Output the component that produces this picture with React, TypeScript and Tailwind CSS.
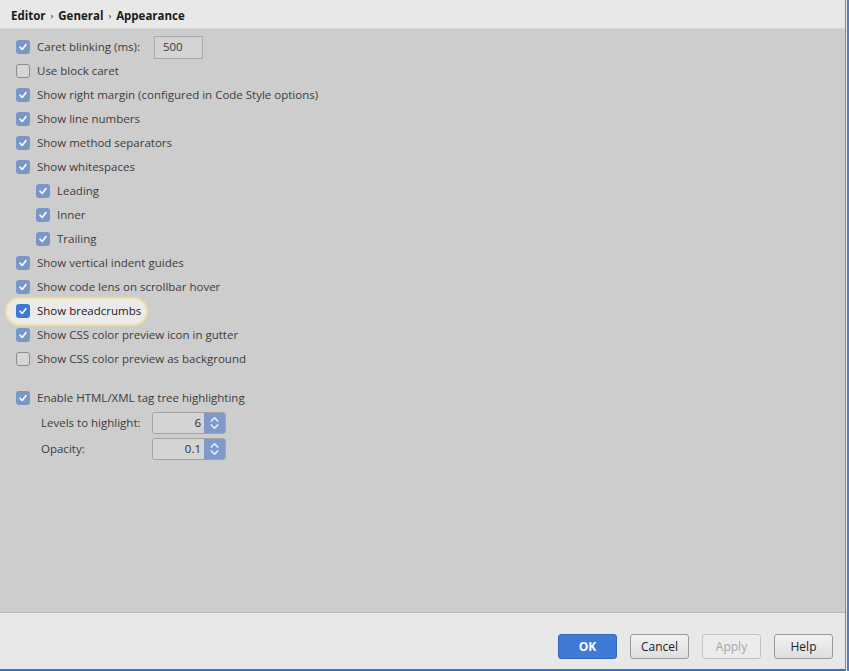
import React from 'react';

const font = { fontFamily: '"Open Sans", "Noto Sans", "Liberation Sans", sans-serif' };

const Check: React.FC<{ checked: boolean; bright?: boolean }> = ({ checked, bright }) => {
  if (!checked) {
    return <span className="w-[14px] h-[14px] rounded-[3px] border border-[#8e8e8e] bg-[#d6d6d6] shrink-0" />;
  }
  return (
    <span
      className={`w-[14px] h-[14px] rounded-[3px] shrink-0 flex items-center justify-center ${
        bright ? 'bg-[#3c78d8]' : 'bg-[#7896c7]'
      }`}
    >
      <svg width="10" height="10" viewBox="0 0 10 10">
        <path d="M2 5.2 L4.2 7.4 L8 2.6" fill="none" stroke="#fff" strokeWidth="1.6" strokeLinecap="round" strokeLinejoin="round" />
      </svg>
    </span>
  );
};

const Row: React.FC<{ label: string; checked: boolean; indent?: boolean; children?: React.ReactNode }> = ({
  label,
  checked,
  indent,
  children,
}) => (
  <div className={`h-6 flex items-center ${indent ? 'pl-[36px]' : 'pl-[16px]'}`}>
    <Check checked={checked} />
    <span className="ml-[7px] text-[#3c3c3c] whitespace-nowrap">{label}</span>
    {children}
  </div>
);

const Spinner: React.FC<{ value: string }> = ({ value }) => (
  <div className="w-[74px] h-[22px] flex rounded-[3px] border border-[#a3a3a3] overflow-hidden">
    <div className="flex-1 bg-[#d4d4d4] flex items-center justify-end pr-[3px] text-[#2e2e2e]">{value}</div>
    <div className="w-[21px] bg-[#7f9aca] flex flex-col items-center justify-center gap-[2px]">
      <svg width="9" height="5" viewBox="0 0 9 5"><path d="M0.8 4.5 L4.5 0.8 L8.2 4.5" fill="none" stroke="#e8eef8" strokeWidth="1.6" /></svg>
      <svg width="9" height="5" viewBox="0 0 9 5"><path d="M0.8 0.5 L4.5 4.2 L8.2 0.5" fill="none" stroke="#e8eef8" strokeWidth="1.6" /></svg>
    </div>
  </div>
);

const Btn: React.FC<{ label: string; kind?: 'primary' | 'disabled' }> = ({ label, kind }) => {
  const cls =
    kind === 'primary'
      ? 'bg-[#3f7bd6] border-[#3567b8] text-white font-bold'
      : kind === 'disabled'
      ? 'bg-[#ececec] border-[#c4c4c4] text-[#a8a8a8]'
      : 'bg-gradient-to-b from-[#f2f2f2] to-[#dedede] border-[#9a9a9a] text-[#222]';
  return (
    <div className={`w-[59px] h-[25px] rounded-[3px] border flex items-center justify-center text-[12px] ${cls}`}>
      {label}
    </div>
  );
};

export default function App() {
  return (
    <div className="w-[849px] h-[671px] flex text-[11.5px] bg-[#e8e8e8]" style={font}>
      <div className="flex-1 flex flex-col">
        <div className="h-[29px] shrink-0 bg-[#e8e8e8] flex items-center pl-[11px] pt-[4px] font-bold text-[11.5px] text-[#1a1a1a] gap-[5px] border-b border-[#d8d8d8]">
          <span>Editor</span>
          <span className="text-[9px] font-normal">›</span>
          <span>General</span>
          <span className="text-[9px] font-normal">›</span>
          <span>Appearance</span>
        </div>
        <div className="flex-1 bg-[#cdcdcd] flex flex-col pt-[6px] border-b border-[#b8b8b8]">
          <Row label="Caret blinking (ms):" checked>
            <div className="ml-[14px] w-[49px] h-[23px] border border-[#a9a9a9] bg-[#d3d3d3] flex items-center pl-[8px] text-[#3c3c3c]">
              500
            </div>
          </Row>
          <Row label="Use block caret" checked={false} />
          <Row label="Show right margin (configured in Code Style options)" checked />
          <Row label="Show line numbers" checked />
          <Row label="Show method separators" checked />
          <Row label="Show whitespaces" checked />
          <Row label="Leading" checked indent />
          <Row label="Inner" checked indent />
          <Row label="Trailing" checked indent />
          <Row label="Show vertical indent guides" checked />
          <Row label="Show code lens on scrollbar hover" checked />
          <div className="h-6 flex items-center pl-[5px]">
            <div className="h-[29px] w-[143px] rounded-full border-2 border-[#f1dfa2] bg-[#ebebeb] flex items-center pl-[9px]">
              <Check checked bright />
              <span className="ml-[7px] text-[#1a1a1a] whitespace-nowrap">Show breadcrumbs</span>
            </div>
          </div>
          <Row label="Show CSS color preview icon in gutter" checked />
          <Row label="Show CSS color preview as background" checked={false} />
          <div className="h-[15px]" />
          <Row label="Enable HTML/XML tag tree highlighting" checked />
          <div className="flex items-center pl-[41px] h-[26px]">
            <span className="w-[111px] text-[#3c3c3c]">Levels to highlight:</span>
            <Spinner value="6" />
          </div>
          <div className="flex items-center pl-[41px] h-[26px]">
            <span className="w-[111px] text-[#3c3c3c]">Opacity:</span>
            <Spinner value="0.1" />
          </div>
        </div>
        <div className="h-[56px] shrink-0 bg-[#e8e8e8] flex items-start justify-end gap-[13px] pr-[12px] pt-[21px]">
          <Btn label="OK" kind="primary" />
          <Btn label="Cancel" />
          <Btn label="Apply" kind="disabled" />
          <Btn label="Help" />
        </div>
        <div className="h-[2px] shrink-0 bg-[#3b6fc2]" />
      </div>
      <div className="w-[4px] bg-[#dfe6f0] border-l border-[#6f8fbf] flex">
        <div className="w-[2px] bg-[#5d7fb5] ml-auto" />
      </div>
    </div>
  );
}
